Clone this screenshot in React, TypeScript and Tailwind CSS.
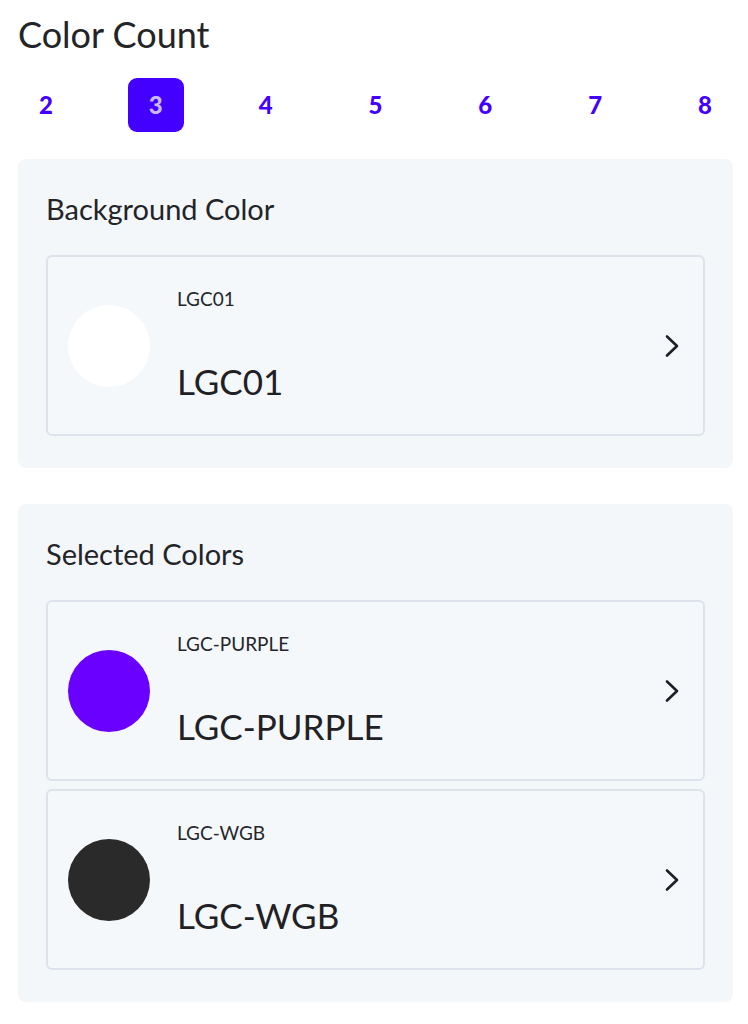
const counts = [2, 3, 4, 5, 6, 7, 8];

type Swatch = { name: string; color: string };

function Chevron() {
  return (
    <svg width="16" height="26" viewBox="0 0 16 26" fill="none" className="shrink-0 text-[#1c1f26]">
      <path d="M3 3.5 L13 13 L3 22.5" stroke="currentColor" strokeWidth="2.6" strokeLinecap="round" strokeLinejoin="round" />
    </svg>
  );
}

function SwatchCard({ swatch }: { swatch: Swatch }) {
  return (
    <div className="flex h-[181px] items-center rounded-md border-2 border-[#dde2ec] bg-[#f5f8fb] pl-5 pr-[23px]">
      <div
        className="h-[82px] w-[82px] shrink-0 rounded-full"
        style={{ backgroundColor: swatch.color }}
      />
      <div className="ml-[27px] flex h-full flex-1 flex-col pt-[30px]">
        <p className="text-[19px] leading-[24px] text-[#24262b]">{swatch.name}</p>
        <p className="mt-[48px] text-[35px] leading-[44px] text-[#1f2125]">{swatch.name}</p>
      </div>
      <Chevron />
    </div>
  );
}

function Panel({ title, children }: { title: string; children: React.ReactNode }) {
  return (
    <section className="rounded-lg bg-[#f4f7fa] px-7 pb-8 pt-[34px]">
      <h2 className="text-[29px] leading-[32px] text-[#222428]">{title}</h2>
      <div className="mt-[30px] flex flex-col gap-[8px]">{children}</div>
    </section>
  );
}

export default function App() {
  const selected = 3;

  return (
    <main
      className="min-h-[1024px] w-[748px] bg-white pl-[18px] pr-[15px] pt-[12px]"
      style={{ fontFamily: "Lato, 'Open Sans', sans-serif" }}
    >
      <h1 className="text-[36px] leading-[44px] text-[#232427]">Color Count</h1>

      <div className="mt-[22px] flex justify-between">
        {counts.map((n) => (
          <button
            key={n}
            className={
              n === selected
                ? "flex h-[54px] w-[56px] items-center justify-center rounded-[9px] bg-[#4400ff] text-[24px] font-black text-[#c9b9ff]"
                : "flex h-[54px] w-[56px] items-center justify-center rounded-[9px] text-[24px] font-black text-[#4400ff]"
            }
          >
            {n}
          </button>
        ))}
      </div>

      <div className="mt-[27px] flex flex-col gap-9">
        <Panel title="Background Color">
          <SwatchCard swatch={{ name: "LGC01", color: "#ffffff" }} />
        </Panel>

        <Panel title="Selected Colors">
          <SwatchCard swatch={{ name: "LGC-PURPLE", color: "#6a00ff" }} />
          <SwatchCard swatch={{ name: "LGC-WGB", color: "#2a2a2b" }} />
        </Panel>
      </div>
    </main>
  );
}
